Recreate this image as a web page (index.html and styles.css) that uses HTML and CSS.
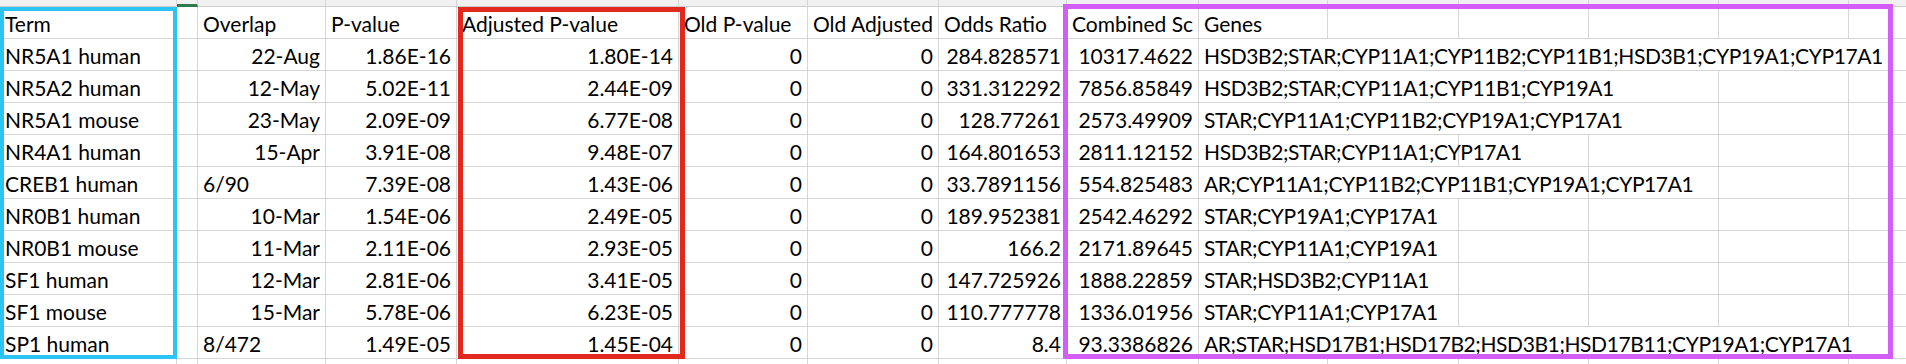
FILE: index.html
```html
<!DOCTYPE html>
<html lang="en">
<head>
  <meta charset="UTF-8" />
  <meta name="viewport" content="width=device-width, initial-scale=1.0" />
  <title>Enrichment results</title>
  <link rel="stylesheet" href="styles.css">
</head>
<body>
  <div class="sheet">
    <!-- remnant of the column header bar -->
    <div class="row strip">
      <div class="c"></div><div class="c sel"></div><div class="c"></div><div class="c"></div><div class="c"></div>
      <div class="c"></div><div class="c"></div><div class="c"></div><div class="c"></div><div class="c"></div>
      <div class="c"></div><div class="c"></div><div class="c"></div><div class="c"></div><div class="c"></div>
    </div>

    <div class="row">
      <div class="c">Term</div><div class="c"></div><div class="c">Overlap</div><div class="c">P-value</div>
      <div class="c">Adjusted P-value</div><div class="c">Old P-value</div><div class="c">Old Adjusted</div>
      <div class="c">Odds Ratio</div><div class="c">Combined Sc</div><div class="c">Genes</div>
      <div class="c"></div><div class="c"></div><div class="c"></div><div class="c"></div><div class="c"></div>
    </div>

    <div class="row">
      <div class="c">NR5A1 human</div><div class="c"></div><div class="c r">22-Aug</div><div class="c r">1.86E-16</div>
      <div class="c r">1.80E-14</div><div class="c r">0</div><div class="c r">0</div>
      <div class="c r">284.828571</div><div class="c r">10317.4622</div>
      <div class="c g s6">HSD3B2;STAR;CYP11A1;CYP11B2;CYP11B1;HSD3B1;CYP19A1;CYP17A1</div>
    </div>

    <div class="row">
      <div class="c">NR5A2 human</div><div class="c"></div><div class="c r">12-May</div><div class="c r">5.02E-11</div>
      <div class="c r">2.44E-09</div><div class="c r">0</div><div class="c r">0</div>
      <div class="c r">331.312292</div><div class="c r">7856.85849</div>
      <div class="c g s4">HSD3B2;STAR;CYP11A1;CYP11B1;CYP19A1</div>
      <div class="c"></div><div class="c"></div>
    </div>

    <div class="row">
      <div class="c">NR5A1 mouse</div><div class="c"></div><div class="c r">23-May</div><div class="c r">2.09E-09</div>
      <div class="c r">6.77E-08</div><div class="c r">0</div><div class="c r">0</div>
      <div class="c r">128.77261</div><div class="c r">2573.49909</div>
      <div class="c g s4">STAR;CYP11A1;CYP11B2;CYP19A1;CYP17A1</div>
      <div class="c"></div><div class="c"></div>
    </div>

    <div class="row">
      <div class="c">NR4A1 human</div><div class="c"></div><div class="c r">15-Apr</div><div class="c r">3.91E-08</div>
      <div class="c r">9.48E-07</div><div class="c r">0</div><div class="c r">0</div>
      <div class="c r">164.801653</div><div class="c r">2811.12152</div>
      <div class="c g s2">HSD3B2;STAR;CYP11A1;CYP17A1</div>
      <div class="c"></div><div class="c"></div><div class="c"></div><div class="c"></div>
    </div>

    <div class="row">
      <div class="c">CREB1 human</div><div class="c"></div><div class="c">6/90</div><div class="c r">7.39E-08</div>
      <div class="c r">1.43E-06</div><div class="c r">0</div><div class="c r">0</div>
      <div class="c r">33.7891156</div><div class="c r">554.825483</div>
      <div class="c g s3">AR;CYP11A1;CYP11B2;CYP11B1;CYP19A1;CYP17A1</div>
      <div class="c"></div><div class="c"></div><div class="c"></div>
    </div>

    <div class="row">
      <div class="c">NR0B1 human</div><div class="c"></div><div class="c r">10-Mar</div><div class="c r">1.54E-06</div>
      <div class="c r">2.49E-05</div><div class="c r">0</div><div class="c r">0</div>
      <div class="c r">189.952381</div><div class="c r">2542.46292</div>
      <div class="c g s2">STAR;CYP19A1;CYP17A1</div>
      <div class="c"></div><div class="c"></div><div class="c"></div><div class="c"></div>
    </div>

    <div class="row">
      <div class="c">NR0B1 mouse</div><div class="c"></div><div class="c r">11-Mar</div><div class="c r">2.11E-06</div>
      <div class="c r">2.93E-05</div><div class="c r">0</div><div class="c r">0</div>
      <div class="c r">166.2</div><div class="c r">2171.89645</div>
      <div class="c g s2">STAR;CYP11A1;CYP19A1</div>
      <div class="c"></div><div class="c"></div><div class="c"></div><div class="c"></div>
    </div>

    <div class="row">
      <div class="c">SF1 human</div><div class="c"></div><div class="c r">12-Mar</div><div class="c r">2.81E-06</div>
      <div class="c r">3.41E-05</div><div class="c r">0</div><div class="c r">0</div>
      <div class="c r">147.725926</div><div class="c r">1888.22859</div>
      <div class="c g s2">STAR;HSD3B2;CYP11A1</div>
      <div class="c"></div><div class="c"></div><div class="c"></div><div class="c"></div>
    </div>

    <div class="row">
      <div class="c">SF1 mouse</div><div class="c"></div><div class="c r">15-Mar</div><div class="c r">5.78E-06</div>
      <div class="c r">6.23E-05</div><div class="c r">0</div><div class="c r">0</div>
      <div class="c r">110.777778</div><div class="c r">1336.01956</div>
      <div class="c g s2">STAR;CYP11A1;CYP17A1</div>
      <div class="c"></div><div class="c"></div><div class="c"></div><div class="c"></div>
    </div>

    <div class="row">
      <div class="c">SP1 human</div><div class="c"></div><div class="c">8/472</div><div class="c r">1.49E-05</div>
      <div class="c r">1.45E-04</div><div class="c r">0</div><div class="c r">0</div>
      <div class="c r">8.4</div><div class="c r">93.3386826</div>
      <div class="c g s6">AR;STAR;HSD17B1;HSD17B2;HSD3B1;HSD17B11;CYP19A1;CYP17A1</div>
    </div>

    <div class="row tail">
      <div class="c"></div><div class="c"></div><div class="c"></div><div class="c"></div><div class="c"></div>
      <div class="c"></div><div class="c"></div><div class="c"></div><div class="c"></div><div class="c"></div>
      <div class="c"></div><div class="c"></div><div class="c"></div><div class="c"></div><div class="c"></div>
    </div>

    <!-- highlight boxes drawn over the grid -->
    <div class="box box-term"></div>
    <div class="box box-adj"></div>
    <div class="box box-genes"></div>
  </div>
</body>
</html>
```

FILE: styles.css
```css
:root {
  --grid: #d6d6d6;
  --strip-bg: #f1f1f1;
  --strip-line: #cdcdcd;
  --excel-green: #2f7a4b;
  --term-blue: #2bc4f3;
  --adj-red: #e2291d;
  --genes-purple: #d35ef7;
}

* {
  margin: 0;
  padding: 0;
  box-sizing: border-box;
}

html, body {
  width: 100%;
  height: 100%;
  overflow: hidden;
  background: #fff;
  color: #000;
  font-family: "Lato", "Liberation Sans", sans-serif;
}

.sheet {
  position: relative;
  width: 1980px;
}

.row {
  display: grid;
  grid-template-columns: 177px 21px 128px 131px 222px 129px 131px 128px 132px 129px 131px 130px 130px 130px 130px;
}

.c {
  height: 32px;
  padding: 0 5px 2px 5px;
  border-right: 1px solid var(--grid);
  border-bottom: 1px solid var(--grid);
  display: flex;
  align-items: flex-end;
  font-size: 21px;
  line-height: 24px;
  white-space: nowrap;
  overflow: hidden;
}

.r { justify-content: flex-end; }

/* gene lists spill over the empty cells to their right */
.g {
  overflow: visible;
  letter-spacing: -0.4px;
}
.s2 { grid-column: span 2; }
.s3 { grid-column: span 3; }
.s4 { grid-column: span 4; }
.s6 { grid-column: span 6; }

/* column header bar, mostly scrolled off */
.strip .c {
  height: 7px;
  background: var(--strip-bg);
  border-bottom-color: var(--strip-line);
}
.strip .sel {
  border-bottom: 3px solid var(--excel-green);
}

.tail .c {
  height: 12px;
  border-bottom: none;
}

.box {
  position: absolute;
  pointer-events: none;
}
.box-term {
  left: 0;
  top: 7px;
  width: 177px;
  height: 352px;
  border: 4px solid var(--term-blue);
}
.box-adj {
  left: 458px;
  top: 7px;
  width: 227px;
  height: 352px;
  border: 5px solid var(--adj-red);
}
.box-genes {
  left: 1063px;
  top: 4px;
  width: 830px;
  height: 355px;
  border: 5px solid var(--genes-purple);
}
```
